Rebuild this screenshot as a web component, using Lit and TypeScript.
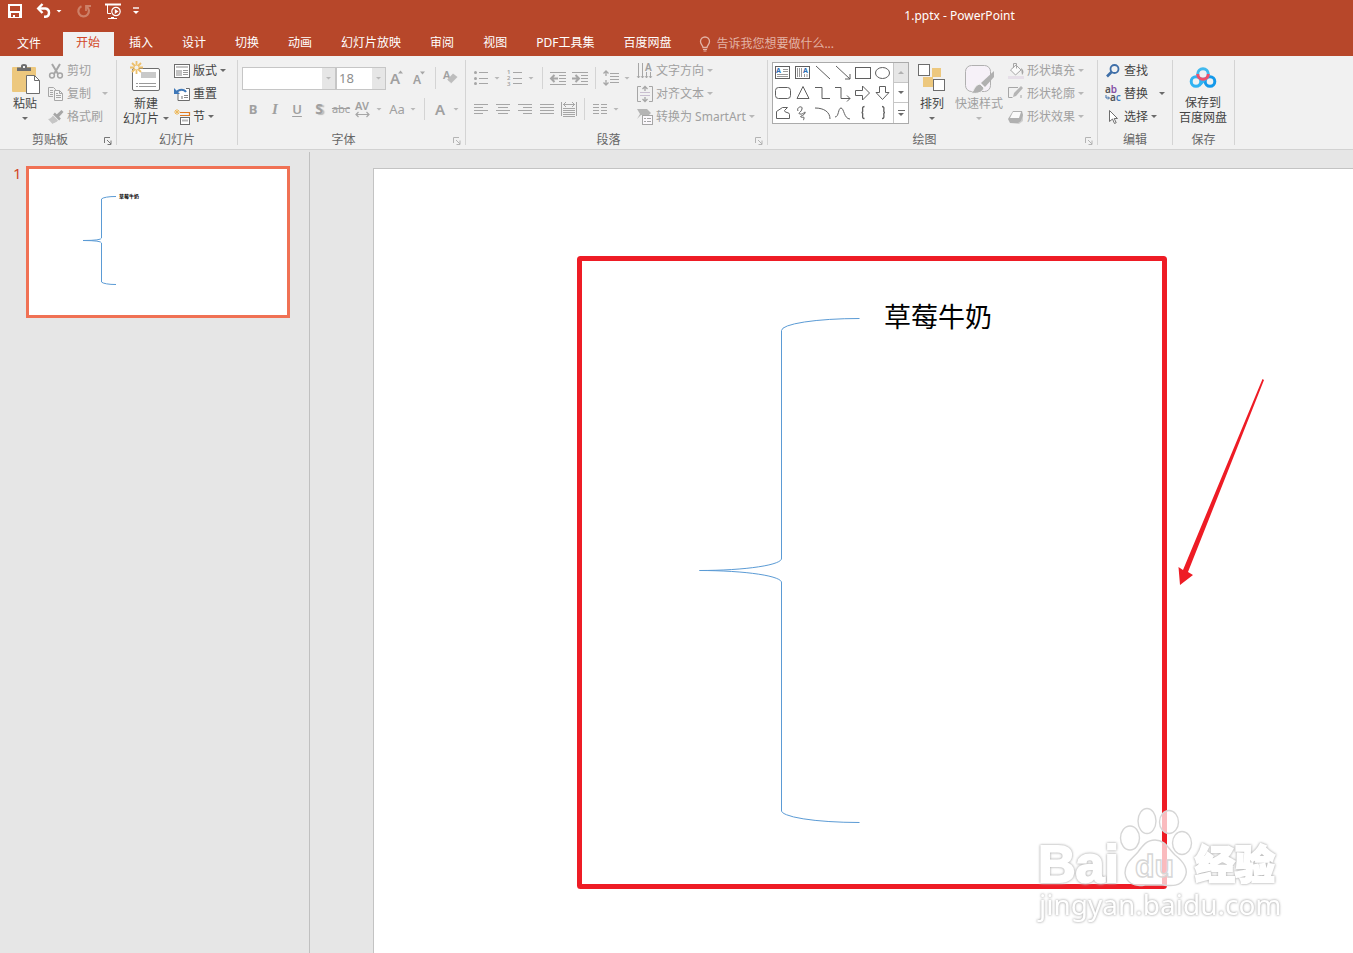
import { LitElement, html, svg, css, nothing } from "lit";
import { customElement, property, state } from "lit/decorators.js";
import { classMap } from "lit/directives/class-map.js";

/* ---------- icons ---------- */

const G = "#a6a6a6"; // disabled stroke
const D = "#6d6d6d"; // enabled stroke

const icon = (w: number, h: number, body: unknown) => html`
  <svg class="icon" width=${w} height=${h} viewBox="0 0 ${w} ${h}" fill="none" aria-hidden="true">${body}</svg>
`;

const lines = (rows: number[][], color = G) =>
  rows.map(([x, y, w]) => svg`<rect x=${x} y=${y} width=${w} height="1" fill=${color} />`);

const icons = {
  save: icon(16, 16, svg`<path fill-rule="evenodd" fill="#fff" d="M1 1h14v14H1zM3 3v5h10V3zM4 10v4h2v-2h2v2h4v-4z" />`),
  undo: icon(16, 16, svg`<path d="M2.500 5.500H9.500A4.200 4.200 0 0 1 9.500 13.800H8" stroke="#fff" stroke-width="2.400" /><path d="M6.500 1L2.200 5.500L6.500 10" stroke="#fff" stroke-width="2.400" />`),
  redo: icon(16, 16, svg`<path d="M10.500 3.600A5.300 5.300 0 1 1 5.500 3.200" stroke="#cd8068" stroke-width="2.200" /><path d="M10 8V3H15" stroke="#cd8068" stroke-width="1.800" />`),
  show: icon(16, 16, svg`<path d="M0 1.500H16" stroke="#fff" stroke-width="2" /><path d="M2.500 2V10.500H6M6 14.500H9M3 15.500H12" stroke="#fff" /><circle cx="11" cy="8.500" r="4.200" stroke="#fff" stroke-width="1.200" /><path d="M9.800 6L13.500 8.500L9.800 11Z" fill="#fff" />`),
  customize: icon(6, 8, svg`<path d="M0 1h6" stroke="#fff" stroke-width="1.400" /><path d="M0 4h6L3 7z" fill="#fff" />`),
  bulb: icon(12, 16, svg`<path d="M4 11.500C4 9.500 1.500 8.500 1.500 5.500A4.500 4.500 0 0 1 10.500 5.500C10.500 8.500 8 9.500 8 11.500Z" stroke="#e3b3a6" stroke-width="1.300" /><path d="M4 13.500h4M4.500 15h3" stroke="#e3b3a6" />`),

  paste: icon(30, 32, svg`
    <rect x="2" y="3" width="24" height="25" rx="1" fill="#edc87e" />
    <path d="M7 7V3.500h4V2a3 2 0 0 1 6 0v1.500h4V7z" fill="#6d6d6d" /><rect x="13" y="2" width="2" height="2" fill="#f1f1f1" />
    <path d="M16.500 11.500h8l5 5v13h-13z" fill="#fff" stroke="#6d6d6d" /><path d="M24.500 11.500v5h5" stroke="#6d6d6d" />`),
  cut: icon(16, 16, svg`
    <path d="M4 1L10 11M12 1L6 11" stroke="#a6a6a6" stroke-width="2" />
    <circle cx="4" cy="12.500" r="2.400" stroke="#a6a6a6" stroke-width="1.500" /><circle cx="12" cy="12.500" r="2.400" stroke="#a6a6a6" stroke-width="1.500" />`),
  copy: icon(16, 16, svg`
    <path d="M5 10.500H.5v-9h5l2 2V5" stroke="#a6a6a6" /><path d="M6.500 4.500h5l3 3v7h-8z" fill="#f4f4f4" stroke="#a6a6a6" /><path d="M11.500 4.500v3h3" stroke="#a6a6a6" />
    ${lines([[2, 4, 3], [2, 6, 3], [2, 8, 3], [8, 7, 2], [8, 9, 5], [8, 11, 5]])}`),
  brush: icon(16, 16, svg`
    <path d="M8 6L13.500 1L15.500 3L10.500 8.500Z" fill="#a6a6a6" /><path d="M6 4.500L12 10.500" stroke="#a6a6a6" stroke-width="2.500" />
    <path d="M5 6.500L10 11.500C8 14 5.500 13.500 4.500 15L0 10C2 10 3.500 8.500 5 6.500Z" fill="#c6c6c6" />`),
  newSlide: icon(32, 32, svg`
    <rect x="2.500" y="7.500" width="27" height="22" rx="1.500" fill="#fff" stroke="#6d6d6d" />
    <rect x="11" y="11" width="15" height="6" fill="#c9c9c9" />
    <path d="M6 22.500h2m1 0h17M6 25.500h2m1 0h17" stroke="#9a9a9a" />
    <path d="M6.500 0v13M0 6.500h13M2 2l9 9M11 2l-9 9" stroke="#edc06c" stroke-width="1.800" /><circle cx="6.500" cy="6.500" r="2" fill="#f1f1f1" />`),
  layout: icon(16, 16, svg`
    <rect x=".5" y="1.500" width="15" height="13" fill="#fff" stroke="#6d6d6d" /><rect x="2" y="3" width="12" height="2" fill="#c4c4c4" />
    <rect x="2" y="7" width="6" height="6" fill="#c4c4c4" />${lines([[9, 7, 5], [9, 9, 5], [9, 11, 5]], "#9a9a9a")}`),
  reset: icon(16, 16, svg`
    <path d="M4 7.500v7h11.500v-12H12" fill="#fff" stroke="#6d6d6d" /><rect x="7" y="10" width="2" height="3" fill="#b9b9b9" />${lines([[10, 9, 4], [10, 11, 4]], "#8a8a8a")}
    <path d="M3 6A5 4 0 0 1 12 6" stroke="#3f78b8" stroke-width="2" /><path d="M0 2v6h6z" fill="#3f78b8" />`),
  section: icon(16, 16, svg`
    <path d="M6 3.500h9.500v3H6" stroke="#e07b20" stroke-width="1.200" /><rect x="6.500" y="8.500" width="9" height="7" fill="#fff" stroke="#6d6d6d" /><path d="M8 11.500h6" stroke="#b9b9b9" stroke-width="2" />
    <path d="M3 0v6M0 3h6M1 1l4 4M5 1l-4 4" stroke="#edb95c" />`),

  grow: icon(16, 18, svg`<text x="0" y="15" class="gt" font-size="15">A</text><path d="M8 4.500L10.500 1.500L13 4.500Z" fill=${G} />`),
  shrink: icon(16, 18, svg`<text x="1" y="15" class="gt" font-size="12">A</text><path d="M8 2.500h5L10.500 5.500Z" fill=${G} />`),
  clear: icon(16, 18, svg`<text x="0" y="10" class="gt" font-size="11">A</text><path d="M4 11L10 4.500L14.500 8L8 14.500Z" fill="#bdbdbd" /><path d="M4 11L8 14.500" stroke="#f1f1f1" />`),
  av: icon(18, 18, svg`<text x="1" y="10" class="gt" font-size="11">AV</text><path d="M2 14.500h13M4.500 12L2 14.500L4.500 17M12.500 12L15 14.500L12.500 17" stroke=${G} stroke-width="1.200" />`),

  bullets: icon(16, 16, svg`<circle cx="2.500" cy="2.500" r="1.500" fill=${G} /><circle cx="2.500" cy="8.500" r="1.500" fill=${G} /><circle cx="2.500" cy="13.500" r="1.500" fill=${G} />${lines([[6, 2, 9], [6, 8, 9], [6, 13, 9]])}`),
  numbers: icon(16, 18, svg`<text x="0" y="5" class="gt" font-size="6">1</text><text x="0" y="11" class="gt" font-size="6">2</text><text x="0" y="17" class="gt" font-size="6">3</text>${lines([[6, 3, 9], [6, 9, 9], [6, 14, 9]])}`),
  outdent: icon(16, 16, svg`${lines([[0, 2, 16], [9, 5, 7], [9, 8, 7], [9, 11, 7], [0, 14, 16]])}<path d="M1 8.500h7M4.500 5L1 8.500L4.500 12" stroke=${G} stroke-width="2" />`),
  indent: icon(16, 16, svg`${lines([[0, 2, 16], [9, 5, 7], [9, 8, 7], [9, 11, 7], [0, 14, 16]])}<path d="M0 8.500h7M3.500 5L7 8.500L3.500 12" stroke=${G} stroke-width="2" />`),
  spacing: icon(16, 16, svg`${lines([[7, 3, 9], [7, 6, 9], [7, 9, 9], [7, 12, 9]])}<path d="M3 1v5M3 10v5M.5 3.500L3 1L5.500 3.500M.5 12.500L3 15L5.500 12.500" stroke=${G} stroke-width="1.300" />`),
  left: icon(16, 12, lines([[1, 1, 14], [1, 4, 9], [1, 7, 14], [1, 10, 9]])),
  center: icon(16, 12, lines([[1, 1, 14], [3, 4, 10], [1, 7, 14], [3, 10, 10]])),
  right: icon(16, 12, lines([[1, 1, 14], [6, 4, 9], [1, 7, 14], [6, 10, 9]])),
  justify: icon(16, 12, lines([[1, 1, 14], [1, 4, 14], [1, 7, 14], [1, 10, 14]])),
  distribute: icon(16, 16, svg`<path d="M.5 1v14M15.500 1v14M2 3.500h12M5 1L2.500 3.500L5 6M11 1L13.500 3.500L11 6" stroke=${G} />${lines([[2, 7, 12], [2, 9, 12], [2, 11, 12], [2, 13, 12], [2, 15, 12]])}`),
  columns: icon(14, 12, lines([[0, 1, 6], [0, 4, 6], [0, 7, 6], [0, 10, 6], [8, 1, 6], [8, 4, 6], [8, 7, 6], [8, 10, 6]])),
  direction: icon(16, 16, svg`<path d="M1.500 0v15M5.500 0v15M9.500 9v6M13.500 9v6" stroke=${G} /><path d="M0 13l1.500 2L3 13M4 13l1.500 2L7 13M8 13l1.500 2L11 13M12 13l1.500 2L15 13" stroke=${G} stroke-width=".8" /><text x="8" y="8" class="gt" font-size="10">A</text>`),
  alignText: icon(16, 16, svg`<path d="M4 .5H.5v15H4M12 .5h3.500v15H12" stroke=${G} />${lines([[3, 6, 10], [3, 9, 10]], "#c9bfd0")}<path d="M8 0v5M8 11v5M5.500 3L8 .5L10.500 3M5.500 13L8 15.500L10.500 13" stroke=${G} stroke-width="1.300" />`),
  smartArt: icon(16, 16, svg`<path d="M0 0h10l4 4-2 2H4l-4 4 3-5z" fill="#b5b5b5" /><rect x="5.500" y="6.500" width="10" height="9" fill="#fbf8fc" stroke=${G} />${lines([[7, 9, 2], [10, 9, 4], [7, 12, 2], [10, 12, 4]])}`),

  arrange: icon(28, 32, svg`<rect x="14" y="5" width="9" height="9" fill="#edc87e" /><rect x="5" y="14" width="10" height="10" fill="#edc87e" /><rect x=".5" y="1.500" width="11" height="11" fill="#fff" stroke=${D} /><rect x="15.500" y="16.500" width="11" height="11" fill="#fff" stroke=${D} />`),
  quickStyle: icon(32, 32, svg`<rect x="2.500" y="2.500" width="25" height="26" rx="6" fill="#f6f1f8" stroke="#b0b0b0" /><path d="M31 8v6l-9 10-4-4z" fill="#b0b0b0" /><path d="M17 21l4 4c-2 5-7 6-13 5 3-1 3-8 9-9z" fill="#b0b0b0" stroke="#f1f1f1" />`),
  fill: icon(16, 16, svg`<path d="M2.500 7L8 2L13 7L7.500 12Z" fill="#fafafa" stroke=${G} /><path d="M5.500 5V.5h3v5" stroke=${G} /><path d="M13 5c3 2 3 5 1 7z" fill=${G} /><rect x="0" y="13" width="16" height="3" fill="#e6dfe8" />`),
  outline: icon(16, 16, svg`<path d="M10 1.500H.5v10h4M13 9v3" stroke=${G} /><path d="M5 11l1-4L13 0l2 2L8 10z" fill="#b5b5b5" />`),
  effects: icon(16, 16, svg`<path d="M2 14l9 1 4-3V5z" fill="#cfcfcf" /><path d="M5 2h9l1 4-2 6-3 2H2L0 10z" fill="#b0b0b0" /><path d="M5 3h8l-2 6H2z" fill="#fafafa" />`),

  find: icon(16, 16, svg`<circle cx="9.500" cy="6" r="4" stroke="#3f6fa8" stroke-width="1.800" /><path d="M6.500 9L2 13.500" stroke="#3f6fa8" stroke-width="2.600" />`),
  replace: icon(16, 16, svg`<text x="0" y="7" font-size="10" font-weight="600" class="it" fill="#555">a<tspan fill="#8650a4">b</tspan></text><text x="5" y="15" font-size="10" font-weight="600" class="it" fill="#555">a<tspan fill="#3f7fc0">c</tspan></text><path d="M1 9v3h3M3 10.500l1.500 1.500L3 13.500" stroke="#3f6fa8" />`),
  select: icon(16, 16, svg`<path d="M4.500 1.500v11l3-2.500 2 4.500 1.700-.8-2-4.200h3.300z" fill="#fff" stroke=${D} />`),
  netdisk: icon(28, 24, svg`
    <circle cx="7" cy="15.500" r="4.800" stroke="#31b3f2" stroke-width="3" /><circle cx="21" cy="15.500" r="4.800" stroke="#1499ea" stroke-width="3" />
    <path d="M10 19.500L18 11.500" stroke="#31b3f2" stroke-width="3" /><circle cx="14" cy="8" r="5.300" stroke="#41b9ee" stroke-width="3" fill="#f1f1f1" /><path d="M8.700 8A5.300 5.300 0 0 0 19.300 8" stroke="#f0506a" stroke-width="3" />`),
  launcher: icon(8, 8, svg`<path d="M.5 6V.5H6" stroke="currentColor" /><path d="M3 3l4 4M7 3.500V7.500H3.500" stroke="currentColor" />`),
};

const s = (body: unknown) => icon(20, 20, svg`<g stroke="#5f5f5f">${body}</g>`);
const shapes: [string, unknown][] = [
  ["文本框", s(svg`<rect x="2.500" y="4.500" width="14" height="12" fill="#fff" /><path d="M10 7.500h5M10 9.500h5M4 12.500h11M4 14.500h11" stroke="#9a9a9a" /><text x="3" y="11" font-size="7" font-weight="700" class="it" fill="#2f6eb5" stroke="none">A</text>`)],
  ["竖排文本框", s(svg`<rect x="2.500" y="4.500" width="14" height="12" fill="#fff" /><path d="M4.500 6v9M6.500 6v9M8.500 6v9M11.500 12v3M14 12v3" stroke="#9a9a9a" /><text x="10" y="11" font-size="7" font-weight="700" class="it" fill="#2f6eb5" stroke="none">A</text>`)],
  ["直线", s(svg`<path d="M3 4l14 13" />`)],
  ["箭头", s(svg`<path d="M3 4l14 13M17 12v5h-5" />`)],
  ["矩形", s(svg`<rect x="2.500" y="5.500" width="15" height="11" />`)],
  ["椭圆", s(svg`<ellipse cx="9.500" cy="11" rx="7" ry="5.500" />`)],
  ["圆角矩形", s(svg`<rect x="2.500" y="5.500" width="15" height="11" rx="3" />`)],
  ["三角形", s(svg`<path d="M10 4.500L16 16.500H4Z" />`)],
  ["肘形连接符", s(svg`<path d="M2 5.500h7v11h8" />`)],
  ["肘形箭头", s(svg`<path d="M2 5.500h6v11h9M14 13.500l3 3-3 3" />`)],
  ["右箭头", s(svg`<path d="M2.500 8.500h7V4l7 7-7 7v-4.500h-7z" />`)],
  ["下箭头", s(svg`<path d="M6.500 4.500v6H3l6.500 7 6.500-7h-3.500v-6z" />`)],
  ["任意多边形", s(svg`<path d="M3.500 16.500v-7l6-4h5l-3 3c0 3 5 1 5 4v4z" />`)],
  ["自由曲线", s(svg`<path d="M5 9c-2-4 5-6 4-2s-5 4-2 5 6-4 5-1-6 3-4 4 3-1 3 1-1 2-1 2" />`)],
  ["弧形", s(svg`<path d="M2 6c9 0 15 4 15 11" />`)],
  ["曲线", s(svg`<path d="M2 15c4 0 3-9 6-9s3 11 9 11" />`)],
  ["左大括号", s(svg`<path d="M11.500 4.500c-4 0 0 6-3 6 3 0-1 6 3 6" stroke-width="1.300" />`)],
  ["右大括号", s(svg`<path d="M9 4.500c4 0 0 6 3 6-3 0 1 6-3 6" stroke-width="1.300" />`)],
];

/* ---------- shared styles ---------- */

const base = css`
  * { box-sizing: border-box; }
  button, select, input { font: inherit; color: inherit; background: none; border: 0; padding: 0; margin: 0; }
  svg { display: block; flex: none; }
  .icon { overflow: visible; }
  .caret { flex: none; width: 6px; height: 3px; background: currentColor; clip-path: polygon(0 0, 100% 0, 50% 100%); }
  .gt { fill: #a0a0a0; font-weight: 600; font-family: "Noto Sans", sans-serif; }
  .it { font-family: "Noto Sans", sans-serif; }
`;

const caret = html`<span class="caret"></span>`;

/* ---------- ribbon ---------- */

@customElement("ribbon-group")
class RibbonGroup extends LitElement {
  @property() label = "";
  @property({ type: Boolean }) launcher = false;
  @property({ type: Boolean }) dim = false;

  static styles = [base, css`
    :host { display: grid; grid-template-rows: 74px 11px; border-right: 1px solid #d4d4d4; height: 85px; }
    .content { display: flex; align-items: flex-start; min-width: 0; }
    .foot { display: flex; align-items: center; text-align: center; color: #666; }
    .name { flex: 1; line-height: 16px; white-space: nowrap; }
    .launch { color: #777; width: 16px; height: 8px; align-self: flex-end; padding-left: 4px; }
    .launch.dim { color: #b4b4b4; }
  `];

  render() {
    return html`
      <div class="content"><slot></slot></div>
      <div class="foot">
        <span class="name">${this.label}</span>
        ${this.launcher ? html`<button class=${classMap({ launch: true, dim: this.dim })} aria-label=${this.label + "设置"}>${icons.launcher}</button>` : nothing}
      </div>`;
  }
}

@customElement("app-ribbon")
class AppRibbon extends LitElement {
  static styles = [base, css`
    :host { display: grid; grid-template-columns: 117px 121px 228px 302px 330px 75px 62px; height: 94px; padding-top: 4px; background: #f1f1f1; border-bottom: 1px solid #d2d2d2; color: #444; }
    .off { color: #a0a0a0; }
    .off .caret { background: #b8b8b8; }
    .caret { background: #6a6a6a; }
    .big { display: flex; flex-direction: column; align-items: center; line-height: 15px; white-space: nowrap; padding-top: 3px; height: 65px; }
    .big .art { display: grid; place-items: center; height: 32px; margin-bottom: 1px; }
    .big .more { display: flex; align-items: center; gap: 4px; min-height: 15px; }
    .paste { width: 36px; margin-left: 7px; padding-top: 4px; }
    .paste .art { margin: 0; }
    .new { width: 50px; margin-left: 4px; padding-top: 1px; }
    .new .art { margin-bottom: 3px; }
    .arrange { width: 46px; }
    .quick { width: 48px; }
    .cloud { width: 60px; }
    .cloud .art { margin-bottom: 2px; }
    .stack { display: grid; grid-template-rows: repeat(3, 23px); justify-items: start; margin-top: -1px; height: 69px; }
    .cmd { display: flex; align-items: center; gap: 3px; height: 23px; padding: 0 3px; white-space: nowrap; line-height: 16px; }
    .cmd .caret.far { margin-left: 8px; }
    .rows { display: grid; grid-template-rows: 30px 32px; padding-left: 4px; align-content: start; padding-top: 3px; }
    .row { display: flex; align-items: center; }
    .tool { display: grid; place-items: center; width: 22px; height: 22px; line-height: 22px; font-size: 13px; }
    .drop { display: grid; place-items: center; width: 10px; height: 22px; margin-right: 2px; }
    .sep { width: 1px; height: 22px; margin: 0 4px; background: #d4d4d4; }
    .b { font-weight: 700; } .i { font-style: italic; font-family: "Liberation Serif", serif; font-weight: 700; font-size: 15px; }
    .u { font-weight: 600; text-decoration: underline; text-underline-offset: 2px; }
    .sh { font-weight: 700; text-shadow: 2px 1px 1px #bbb; font-size: 14px; }
    .st { text-decoration: line-through; font-size: 11px; }
    .fc { font-weight: 600; font-size: 15px; }
    .combo { display: grid; grid-template-columns: 1fr 13px; height: 23px; border: 1px solid #c6c6c6; background: #fff; }
    .combo select { appearance: none; grid-area: 1 / 1 / 2 / 3; padding: 0 2px; font-size: 13px; color: #8e8e8e; outline: 0; }
    .combo .arrow { grid-area: 1 / 2; background: #e6e6e6; display: grid; place-items: center; pointer-events: none; }
    .face { width: 94px; }
    .size { width: 50px; border-left: 1px solid #c6c6c6; margin-right: 1px; }
    .gallery { display: grid; grid-template-columns: 1fr 15px; width: 137px; height: 62px; margin: 2px 0 0 4px; background: #fff; border: 1px solid #ababab; }
    .shapes { display: grid; grid-template-columns: repeat(6, 20px); grid-template-rows: repeat(3, 20px); margin-top: -1px; }
    .scroll { display: grid; grid-template-rows: repeat(3, 20px); border-left: 1px solid #c6c6c6; }
    .scroll button { display: grid; place-content: center; justify-items: center; gap: 2px; border-bottom: 1px solid #c6c6c6; }
    .scroll button:first-child { background: #e6e6e6; }
    .scroll button:last-child { border-bottom: 0; }
    .up { transform: rotate(180deg); background: #b0b0b0; }
    .bar { width: 7px; height: 1px; background: #6a6a6a; }
    .edit { padding-left: 4px; }
    .second { padding-left: 2px; }
  `];

  private cmd(art: unknown, text: string, off = false, drop = "") {
    return html`<button class=${classMap({ cmd: true, off })}>${art}<span>${text}</span>${drop ? html`<span class="caret ${drop}"></span>` : nothing}</button>`;
  }
  private tool(art: unknown, name: string, cls = "") {
    return html`<button class="tool ${cls}" aria-label=${name}>${art}</button>`;
  }
  private drop(name: string) {
    return html`<button class="drop" aria-label=${name + "选项"}>${caret}</button>`;
  }

  render() {
    const sep = html`<span class="sep"></span>`;
    return html`
      <ribbon-group label="剪贴板" launcher>
        <button class="big paste"><span class="art">${icons.paste}</span><span>粘贴</span><span class="more">${caret}</span></button>
        <div class="stack second">
          ${this.cmd(icons.cut, "剪切", true)}
          ${this.cmd(icons.copy, "复制", true, "far")}
          ${this.cmd(icons.brush, "格式刷", true)}
        </div>
      </ribbon-group>

      <ribbon-group label="幻灯片">
        <button class="big new"><span class="art">${icons.newSlide}</span><span>新建</span><span class="more">幻灯片${caret}</span></button>
        <div class="stack">
          ${this.cmd(icons.layout, "版式", false, "near")}
          ${this.cmd(icons.reset, "重置")}
          ${this.cmd(icons.section, "节", false, "near")}
        </div>
      </ribbon-group>

      <ribbon-group label="字体" launcher dim>
        <div class="rows off">
          <div class="row">
            <label class="combo face"><select aria-label="字体"><option></option></select><span class="arrow">${caret}</span></label>
            <label class="combo size"><select aria-label="字号"><option>18</option></select><span class="arrow">${caret}</span></label>
            ${this.tool(icons.grow, "增大字号")}${this.tool(icons.shrink, "减小字号")}${sep}${this.tool(icons.clear, "清除格式")}
          </div>
          <div class="row">
            ${this.tool("B", "加粗", "b")}${this.tool("I", "倾斜", "i")}${this.tool("U", "下划线", "u")}${this.tool("S", "阴影", "sh")}${this.tool("abc", "删除线", "st")}
            ${this.tool(icons.av, "字符间距")}${this.drop("字符间距")}${this.tool("Aa", "更改大小写")}${this.drop("更改大小写")}${sep}
            ${this.tool("A", "字体颜色", "fc")}${this.drop("字体颜色")}
          </div>
        </div>
      </ribbon-group>

      <ribbon-group label="段落" launcher dim>
        <div class="rows off">
          <div class="row">
            ${this.tool(icons.bullets, "项目符号")}${this.drop("项目符号")}${this.tool(icons.numbers, "编号")}${this.drop("编号")}${sep}
            ${this.tool(icons.outdent, "降低列表级别")}${this.tool(icons.indent, "提高列表级别")}${sep}${this.tool(icons.spacing, "行距")}${this.drop("行距")}
          </div>
          <div class="row">
            ${this.tool(icons.left, "左对齐")}${this.tool(icons.center, "居中")}${this.tool(icons.right, "右对齐")}${this.tool(icons.justify, "两端对齐")}
            ${this.tool(icons.distribute, "分散对齐")}${sep}${this.tool(icons.columns, "分栏")}${this.drop("分栏")}
          </div>
        </div>
        <div class="stack">
          ${this.cmd(icons.direction, "文字方向", true, "near")}
          ${this.cmd(icons.alignText, "对齐文本", true, "near")}
          ${this.cmd(icons.smartArt, "转换为 SmartArt", true, "near")}
        </div>
      </ribbon-group>

      <ribbon-group label="绘图" launcher dim>
        <div class="gallery">
          <div class="shapes">${shapes.map(([name, art]) => html`<button aria-label=${name}>${art}</button>`)}</div>
          <div class="scroll">
            <button aria-label="上一行"><span class="caret up"></span></button>
            <button aria-label="下一行">${caret}</button>
            <button aria-label="其他形状"><span class="bar"></span>${caret}</button>
          </div>
        </div>
        <button class="big arrange"><span class="art">${icons.arrange}</span><span>排列</span><span class="more">${caret}</span></button>
        <button class="big quick off"><span class="art">${icons.quickStyle}</span><span>快速样式</span><span class="more">${caret}</span></button>
        <div class="stack second">
          ${this.cmd(icons.fill, "形状填充", true, "near")}
          ${this.cmd(icons.outline, "形状轮廓", true, "near")}
          ${this.cmd(icons.effects, "形状效果", true, "near")}
        </div>
      </ribbon-group>

      <ribbon-group label="编辑">
        <div class="stack edit">
          ${this.cmd(icons.find, "查找")}
          ${this.cmd(icons.replace, "替换", false, "far")}
          ${this.cmd(icons.select, "选择", false, "near")}
        </div>
      </ribbon-group>

      <ribbon-group label="保存">
        <button class="big cloud"><span class="art">${icons.netdisk}</span><span>保存到</span><span>百度网盘</span></button>
      </ribbon-group>`;
  }
}

/* ---------- slide ---------- */

@customElement("slide-canvas")
class SlideCanvas extends LitElement {
  static styles = [base, css`
    :host { display: block; position: relative; overflow: hidden; background: #fff; border: 1px solid #c3c3c3; border-width: 1px 0 0 1px; }
    .ink { position: absolute; inset: 0; width: 100%; height: 100%; }
    .topic { position: absolute; left: 510px; top: 128px; margin: 0; font-size: 27px; line-height: 40px; font-weight: 400; color: #000; white-space: nowrap; }
    .logo { font-family: "Liberation Sans", sans-serif; font-weight: 700; }
    .cjk { font-family: "Noto Sans CJK SC", sans-serif; font-weight: 900; }
    .url { font-family: "Noto Sans", sans-serif; }
    .halo { fill: #fff; stroke: #fff; stroke-width: 2px; filter: drop-shadow(0 0 1px #b4b4b4) drop-shadow(0 0 1px #d8d8d8); }
    .soft { fill: #fff; filter: drop-shadow(0 0 1px #b4b4b4) drop-shadow(0 0 1px #d8d8d8); }
  `];

  render() {
    return html`
      <svg class="ink" fill="none" aria-hidden="true">
        <path d="M485.500 149.500A78 12 0 0 0 407.500 161.500V389A82 12 0 0 1 325.500 401.500A82 12 0 0 1 407.500 414V641A78 12 0 0 0 485.500 653.500" stroke="#5b9bd5" />
        <rect x="205.500" y="89.500" width="585" height="628" rx="1" stroke="#ee1c25" stroke-width="5" />
        <path d="M888.500 210L890 211L814 403L819 406L806 416L804.500 398L809 401Z" fill="#ee1c25" />
      </svg>
      <p class="topic">草莓牛奶</p>
      <svg class="ink" aria-hidden="true">
        <g fill="#fff" fill-opacity=".7" stroke="#d6d6d6" stroke-width="1.400">
          <ellipse cx="756" cy="669" rx="9.500" ry="12" />
          <ellipse cx="773" cy="652" rx="9" ry="12.500" />
          <ellipse cx="795" cy="653" rx="9.500" ry="11.500" />
          <ellipse cx="808" cy="674" rx="9.500" ry="11.500" />
          <path d="M781 671C791 671 794 679 801 686C810 693 815 700 811 708C807 718 797 717 789 716H771C760 718 752 714 751 704C751 694 758 690 764 683C769 676 773 671 781 671Z" />
          <text x="761" y="708" class="logo" font-size="32">du</text>
        </g>
        <text x="664" y="713" class="logo halo" font-size="52">Bai</text>
        <text x="821" y="710" class="cjk halo" font-size="40">经验</text>
        <text x="665" y="746" class="url soft" font-size="28">jingyan.baidu.com</text>
      </svg>`;
  }
}

/* ---------- application ---------- */

@customElement("app-root")
class AppRoot extends LitElement {
  @state() private tab = "开始";
  private tabs = ["开始", "插入", "设计", "切换", "动画", "幻灯片放映", "审阅", "视图", "PDF工具集", "百度网盘"];

  static styles = [base, css`
    :host { display: grid; grid-template-rows: 32px 24px auto 1fr; height: 100vh; overflow: hidden; background: #e6e6e6; font: 12px/16px "Noto Sans", "Noto Sans CJK SC", sans-serif; }
    .title { display: flex; justify-content: space-between; background: #b7472a; color: #fff; padding: 3px 25% 0 7px; }
    .quick { display: flex; align-items: center; height: 16px; }
    .quick button { display: grid; place-items: center; height: 16px; min-width: 16px; }
    .quick .narrow { min-width: 10px; }
    .undo { margin-left: 13px; } .undo-more { margin-left: 2px; } .redo { margin-left: 12px; } .show { margin-left: 13px; } .custom { margin-left: 10px; }
    .doc { margin: 0; line-height: 26px; font-size: 12px; font-weight: 400; white-space: nowrap; }
    .tabs { display: flex; gap: 2px; background: #b7472a; color: #fff; }
    .tab { padding: 0 14px 2px 13px; line-height: 22px; white-space: nowrap; }
    .file { padding: 0 20px 0 17px; }
    .tab.on { background: #f1f1f1; color: #d24726; }
    .tell { display: flex; align-items: center; gap: 5px; margin-left: 12px; color: #e3b3a6; }
    .tell input { width: 140px; outline: 0; }
    .tell input::placeholder { color: #e3b3a6; opacity: 1; }
    .work { display: grid; grid-template-columns: 310px 1fr; min-height: 0; padding-top: 2px; }
    .panel { display: flex; align-items: flex-start; gap: 5px; border-right: 1px solid #c0c0c0; padding: 14px 19px 0 13px; }
    .num { width: 8px; font-size: 15px; line-height: 14px; color: #d24726; }
    .thumb { flex: 1; height: 152px; background: #fff; border: 3px solid #f07154; }
    .thumb svg { width: 100%; height: 100%; }
    .stage { padding: 16px 0 0 63px; min-height: 0; display: grid; }
    .mini { font-family: "Noto Sans CJK SC", sans-serif; font-weight: 700; }
  `];

  render() {
    return html`
      <header class="title">
        <div class="quick">
          <button aria-label="保存">${icons.save}</button>
          <button class="undo" aria-label="撤消">${icons.undo}</button>
          <button class="narrow undo-more" aria-label="撤消列表">${caret}</button>
          <button class="redo" aria-label="恢复">${icons.redo}</button>
          <button class="show" aria-label="从头开始放映">${icons.show}</button>
          <button class="narrow custom" aria-label="自定义快速访问工具栏">${icons.customize}</button>
        </div>
        <h1 class="doc">1.pptx - PowerPoint</h1>
      </header>
      <nav class="tabs">
        <button class="tab file">文件</button>
        ${this.tabs.map((t) => html`<button class=${classMap({ tab: true, on: t === this.tab })} @click=${() => (this.tab = t)}>${t}</button>`)}
        <label class="tell">${icons.bulb}<input type="text" aria-label="告诉我" placeholder="告诉我您想要做什么..." /></label>
      </nav>
      <app-ribbon></app-ribbon>
      <main class="work">
        <aside class="panel">
          <span class="num">1</span>
          <div class="thumb">
            <svg viewBox="0 0 258 146" fill="none" aria-hidden="true">
              <path d="M87 27.500A14 3 0 0 0 72.500 30V69Q72.500 71.500 54 71.500Q72.500 71.500 72.500 74V113A14 3 0 0 0 87 115.500" stroke="#5b9bd5" />
              <text x="90" y="29" font-size="5" class="mini" fill="#000">草莓牛奶</text>
            </svg>
          </div>
        </aside>
        <div class="stage"><slide-canvas></slide-canvas></div>
      </main>`;
  }
}
